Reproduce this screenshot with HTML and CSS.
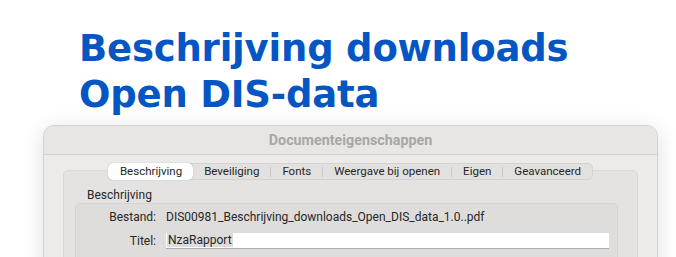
FILE: index.html
```html
<!DOCTYPE html>
<html lang="nl">

<head>
    <meta charset="UTF-8">
    <meta name="viewport" content="width=device-width, initial-scale=1.0">
    <title>Documenteigenschappen</title>
    <link rel="stylesheet" href="styles.css">
</head>

<body>
    <h1 class="doc-title">Beschrijving downloads<br>Open DIS-data</h1>

    <div class="dialog">
        <div class="dialog-titlebar">Documenteigenschappen</div>

        <div class="dialog-body">
            <div class="tabs">
                <div class="tab active">Beschrijving</div>
                <div class="tab">Beveiliging</div>
                <div class="tab-sep"></div>
                <div class="tab">Fonts</div>
                <div class="tab-sep"></div>
                <div class="tab">Weergave bij openen</div>
                <div class="tab-sep"></div>
                <div class="tab">Eigen</div>
                <div class="tab-sep"></div>
                <div class="tab">Geavanceerd</div>
            </div>

            <div class="tab-panel">
                <div class="group-label">Beschrijving</div>
                <div class="group-box">
                    <div class="field-row">
                        <span class="field-label">Bestand:</span>
                        <span class="field-value">DIS00981_Beschrijving_downloads_Open_DIS_data_1.0..pdf</span>
                    </div>
                    <div class="field-row">
                        <span class="field-label">Titel:</span>
                        <div class="field-input"><span class="selected-text">NzaRapport</span></div>
                    </div>
                </div>
            </div>
        </div>
    </div>
</body>

</html>
```

FILE: styles.css
```css
html,
body {
    height: 257px;
    overflow: hidden;
}

body {
    margin: 0;
    background-color: #ffffff;
}

.doc-title {
    margin: 0;
    padding: 26px 0 0 79px;
    font-family: "DejaVu Sans", Verdana, sans-serif;
    font-size: 37px;
    font-weight: bold;
    line-height: 46px;
    letter-spacing: -0.2px;
    color: #0556c2;
    height: 99px;
}

.dialog {
    margin-left: 43px;
    width: 613px;
    height: 180px;
    background-color: #ecebea;
    border: 1px solid #d6d4d3;
    border-radius: 11px;
    box-shadow: 0 4px 22px rgba(0, 0, 0, 0.13);
    font-family: Roboto, "Liberation Sans", sans-serif;
    font-size: 12px;
    color: #262626;
    overflow: hidden;
}

.dialog-titlebar {
    height: 28px;
    line-height: 29px;
    text-align: center;
    font-weight: bold;
    font-size: 14.3px;
    color: #a8a7a6;
    background-color: #e7e6e5;
    border-bottom: 1px solid #d3d1d0;
}

.dialog-body {
    padding: 8px 19px 0 19px;
}

.tabs {
    display: flex;
    align-items: center;
    height: 17px;
    width: fit-content;
    margin: 0 auto;
    background-color: #e2e1e0;
    border: 1px solid #d5d3d2;
    border-radius: 5px;
    position: relative;
    z-index: 1;
    box-sizing: border-box;
    font-size: 11.5px;
}

.tab {
    padding: 0 11px;
    line-height: 15px;
}

.tab.active {
    background-color: #ffffff;
    border-radius: 5px;
    box-shadow: 0 0 1px rgba(0, 0, 0, 0.4);
    height: 17px;
    line-height: 17px;
    margin: -1px 0 -1px -1px;
    padding: 0 11px 0 12px;
    box-sizing: border-box;
}

.tab-sep {
    width: 1px;
    height: 10px;
    background-color: #cbc9c8;
}

.tab-panel {
    margin-top: -10px;
    height: 120px;
    background-color: #e4e3e2;
    border: 1px solid #dbd9d8;
    border-radius: 5px;
    padding: 16px 19px 0 11px;
}

.group-label {
    padding-left: 12px;
    line-height: 16px;
}

.group-box {
    background-color: #dedddc;
    border: 1px solid #d6d4d3;
    border-radius: 5px;
    padding: 1px 8px 0 0;
    height: 80px;
}

.field-row {
    display: flex;
    align-items: center;
    height: 24px;
}

.field-label {
    width: 80px;
    text-align: right;
    padding-right: 10px;
}

.field-input {
    flex: 1;
    height: 16px;
    background-color: #ffffff;
    border-bottom: 1px solid #aeadac;
    box-sizing: border-box;
    padding-left: 1px;
    line-height: 15px;
}

.selected-text {
    background-color: #dcdcdc;
    padding: 0 1px;
}
```
